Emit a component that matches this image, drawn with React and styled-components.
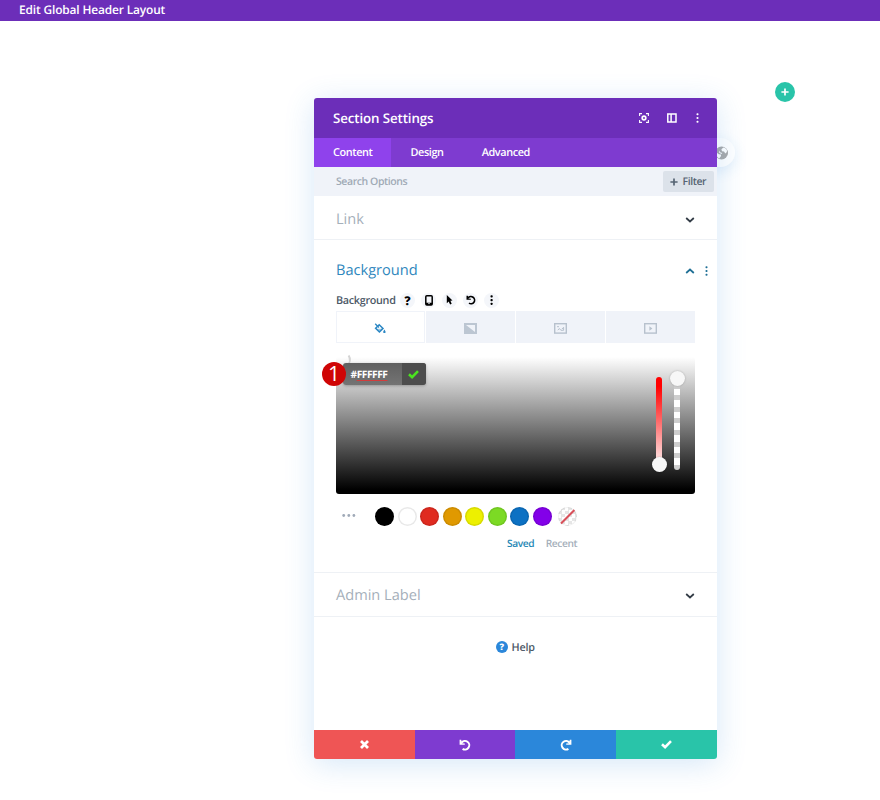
import React from "react";
import styled, { createGlobalStyle } from "styled-components";

const GlobalStyle = createGlobalStyle`
  * {
    box-sizing: border-box;
  }
  body {
    margin: 0;
    background: #fff;
    font-family: "Open Sans", "Noto Sans", sans-serif;
    font-weight: 600;
    color: #4c5866;
    text-rendering: geometricPrecision;
  }
  svg {
    display: block;
    flex: none;
  }
`;

const Page = styled.div`
  position: relative;
  width: 880px;
  height: 800px;
  overflow: hidden;
`;

const TopBar = styled.header`
  display: flex;
  align-items: center;
  height: 21px;
  padding: 0 19px 2px;
  background: #6c2eb9;
  color: #fff;
  font-size: 11.9px;
  letter-spacing: -0.13px;
`;

const AddButton = styled.div`
  position: absolute;
  left: 775px;
  top: 82px;
  width: 20px;
  height: 20px;
  border-radius: 50%;
  display: flex;
  align-items: center;
  justify-content: center;
  background: #29c4a9;
`;

const GlobeButton = styled.div`
  position: absolute;
  left: 680px;
  top: 138px;
  width: 55px;
  height: 29px;
  border-radius: 15px;
  padding: 8px 6px 0 35px;
  background: #fff;
  box-shadow: 0 4px 14px rgba(43, 135, 218, 0.14);
`;

const Modal = styled.section`
  position: relative;
  display: flex;
  flex-direction: column;
  width: 402.5px;
  height: 661px;
  margin: 77px 0 0 314px;
  border-radius: 3px;
  background: #fff;
  box-shadow: 0 5px 30px rgba(43, 135, 218, 0.2);
  overflow: hidden;
`;

const ModalHeader = styled.div`
  display: flex;
  align-items: center;
  height: 40px;
  padding: 0 18px 0 19px;
  background: #6c2eb9;
  color: #fff;
`;

const ModalTitle = styled.h1`
  flex: 1;
  margin: 0;
  font-size: 13.3px;
  font-weight: 600;
  letter-spacing: -0.1px;
`;

const HeaderIcons = styled.div`
  display: flex;
  align-items: center;
  gap: 18.5px;
`;

const Tabs = styled.nav`
  display: flex;
  height: 29px;
  background: #7e3bd0;
`;

const Tab = styled.div`
  display: flex;
  align-items: center;
  padding: 0 19px;
  background: ${(props) => (props.$active ? "#8f42ec" : "transparent")};
  color: #fff;
  font-size: 10.9px;
  letter-spacing: -0.4px;
`;

const SearchBar = styled.div`
  display: flex;
  align-items: center;
  justify-content: space-between;
  height: 29px;
  padding: 0 3px 0 22px;
  background: #f0f3f9;
  color: #a0aab6;
  font-size: 10.5px;
  letter-spacing: -0.42px;
`;

const FilterButton = styled.div`
  display: flex;
  align-items: center;
  gap: 5px;
  height: 21px;
  width: 51px;
  padding-left: 7px;
  border-radius: 2px;
  background: #dce2ea;
  color: #566473;
`;

const Group = styled.div`
  height: ${(props) => props.$height}px;
  padding: 0 22px;
  border-bottom: 1px solid #eef1f5;
`;

const GroupHead = styled.div`
  display: flex;
  align-items: center;
  justify-content: space-between;
  height: ${(props) => props.$height || 44}px;
  padding-top: 1px;
  color: ${(props) => (props.$open ? "#2f87bd" : "#a5afba")};
  font-size: 14.6px;
  font-weight: 400;
`;

const HeadIcons = styled.div`
  display: flex;
  align-items: center;
  gap: 10px;
  margin: 1px ${(props) => (props.$open ? -13 : 0)}px 0 0;
`;

const LabelRow = styled.div`
  display: flex;
  align-items: center;
  height: 16px;
  margin-top: -7px;
  font-size: 10.8px;
  letter-spacing: -0.3px;
`;

const LabelText = styled.span`
  width: 64px;
`;

const LabelIcon = styled.span`
  display: flex;
  align-items: center;
  justify-content: center;
  width: 15px;
  height: 15px;
  margin-right: 6px;
  border-radius: 50%;
  background: #f4f6fa;
  color: #000;
  font-size: 12px;
  font-weight: 800;
`;

const FillTabs = styled.div`
  display: grid;
  grid-template-columns: repeat(4, 1fr);
  gap: 1.5px;
  height: 31.5px;
  margin-top: 3px;
`;

const FillTab = styled.div`
  display: flex;
  align-items: center;
  justify-content: center;
  padding-top: 3px;
  border: 1px solid #f0f3f9;
  background: ${(props) => (props.$active ? "#fff" : "#f0f3f9")};
`;

const Picker = styled.div`
  position: relative;
  height: 137px;
  margin-top: 14.5px;
  border-radius: 3px;
  background: linear-gradient(#fff 0%, #000 97%);
`;

const PickerHandle = styled.div`
  position: absolute;
  left: -3px;
  top: -6px;
  width: 18px;
  height: 18px;
  border-radius: 50%;
  border: 2px solid transparent;
  border-right-color: #d4d4d4;
  transform: rotate(10deg);
`;

const HexField = styled.div`
  position: absolute;
  left: 7px;
  top: 6px;
  display: flex;
  width: 82.5px;
  height: 22px;
  border-radius: 3px;
  background: linear-gradient(#606060, #747474);
  box-shadow: 0 1px 3px rgba(0, 0, 0, 0.25);
  color: #fff;
  font-size: 10.2px;
  font-weight: 700;
  letter-spacing: -0.45px;
  line-height: 22px;
  overflow: hidden;
`;

const HexValue = styled.span`
  flex: 1;
  padding-left: 7.5px;
  span {
    text-decoration: underline #d33c3c 1px;
    text-underline-offset: 2px;
  }
`;

const HexConfirm = styled.span`
  display: flex;
  align-items: center;
  justify-content: center;
  width: 24px;
  background: #4d4d4d;
`;

const StepBadge = styled.div`
  position: absolute;
  left: -14px;
  top: 5px;
  width: 24px;
  height: 24px;
  border-radius: 50%;
  background: #cf0505;
  color: #fff;
  font-size: 21px;
  font-weight: 400;
  line-height: 24px;
  text-align: center;
`;

const Slider = styled.div`
  position: absolute;
  left: ${(props) => props.$left}px;
  top: 20px;
  width: 6px;
  height: 93px;
  border-radius: 3px;
`;

const SaturationSlider = styled(Slider)`
  background: linear-gradient(#f00 10%, #fff 100%);
`;

const AlphaSlider = styled(Slider)`
  background: repeating-linear-gradient(#fff 0 6.5px, #cecece 6.5px 11.6px);
`;

const SliderKnob = styled.div`
  position: absolute;
  left: -4.5px;
  top: ${(props) => props.$top}px;
  width: 15px;
  height: 15px;
  border-radius: 50%;
  background: #f7f7f7;
  box-shadow: 0 0 2px rgba(0, 0, 0, 0.25);
`;

const SwatchRow = styled.div`
  display: flex;
  align-items: center;
  height: 20px;
  margin-top: 12px;
  padding-left: 6px;
`;

const Swatches = styled.div`
  display: flex;
  gap: 3.5px;
  margin-left: 19px;
`;

const Swatch = styled.span`
  width: 19px;
  height: 19px;
  border-radius: 50%;
  background: ${(props) => props.$color};
  box-shadow: inset 0 0 0 1.5px rgba(0, 0, 0, 0.09);
`;

const ClearSwatch = styled.span`
  width: 19px;
  height: 19px;
  margin-left: 6.5px;
  border-radius: 50%;
  background: repeating-conic-gradient(#e6e6e6 0 25%, #fff 0 50%) 0 0 / 7px 7px;
  box-shadow: inset 0 0 0 1px rgba(0, 0, 0, 0.06);
`;

const PaletteTabs = styled.div`
  display: flex;
  gap: 11.5px;
  margin: 10px 0 0 171px;
  font-size: 10.2px;
  letter-spacing: -0.4px;
  line-height: 15px;
`;

const PaletteTab = styled.span`
  color: ${(props) => (props.$active ? "#1f87b5" : "#a5afba")};
`;

const Help = styled.div`
  flex: 1;
  display: flex;
  align-items: flex-start;
  justify-content: center;
  gap: 4px;
  padding-top: 23px;
  font-size: 10.8px;
  letter-spacing: -0.2px;
  line-height: 15px;
`;

const HelpIcon = styled.span`
  width: 12px;
  height: 12px;
  margin-top: 1px;
  border-radius: 50%;
  background: #2b87da;
  color: #fff;
  font-size: 9px;
  font-weight: 800;
  line-height: 12px;
  text-align: center;
`;

const Footer = styled.footer`
  display: grid;
  grid-template-columns: repeat(4, 1fr);
  height: 29px;
`;

const FooterButton = styled.div`
  display: flex;
  align-items: center;
  justify-content: center;
  background: ${(props) => props.$color};
`;

const swatches = [
  "#000000",
  "#ffffff",
  "#e02b20",
  "#e09900",
  "#edf000",
  "#7cda24",
  "#0c71c3",
  "#8300e9",
];

function Plus({ size = 8, color = "#fff" }) {
  return (
    <svg width={size} height={size} viewBox="0 0 8 8">
      <path d="M4 0.4V7.6M0.4 4H7.6" stroke={color} strokeWidth="1.7" />
    </svg>
  );
}

function Dots({ color = "#fff", size = 2 }) {
  return (
    <svg width="3" height="10" viewBox="0 0 3 10" fill={color}>
      <rect x="0.5" y="0.3" width={size} height={size} rx="0.8" />
      <rect x="0.5" y="4" width={size} height={size} rx="0.8" />
      <rect x="0.5" y="7.7" width={size} height={size} rx="0.8" />
    </svg>
  );
}

function Chevron({ up, color = "#333c46" }) {
  return (
    <svg width="10" height="6" viewBox="0 0 10 6" fill="none" stroke={color} strokeWidth="1.7">
      <path d={up ? "M1.2 5L5 1.5L8.8 5" : "M1.2 1L5 4.5L8.8 1"} />
    </svg>
  );
}

function Check({ color = "#fff" }) {
  return (
    <svg width="11" height="9" viewBox="0 0 11 9" fill="none" stroke={color} strokeWidth="2.6">
      <path d="M1 4.2L4.1 7.1L10 1.2" />
    </svg>
  );
}

function Undo({ size = 12, color = "#fff", flip }) {
  return (
    <svg width={size} height={size} viewBox="0 0 12 12">
      <g transform={flip ? "translate(12 0) scale(-1 1)" : undefined}>
        <path
          d="M2.5 3.7A4.3 4.3 0 1 1 3.6 9.8"
          fill="none"
          stroke={color}
          strokeWidth="2"
        />
        <path d="M0.6 0.8V5.8H5.8V4.5L3 4.3L2.2 0.8Z" fill={color} />
      </g>
    </svg>
  );
}

function Focus() {
  return (
    <svg width="10" height="10" viewBox="0 0 10 10" fill="none" stroke="#fff">
      <path
        d="M0.6 3V0.6H3M7 0.6H9.4V3M9.4 7V9.4H7M3 9.4H0.6V7"
        strokeWidth="1.1"
      />
      <circle cx="5" cy="5" r="1.8" strokeWidth="1.7" />
    </svg>
  );
}

function Sidebar() {
  return (
    <svg width="10" height="10" viewBox="0 0 10 10" fill="none" stroke="#fff">
      <rect x="0.8" y="1" width="8.2" height="8" strokeWidth="1.5" />
      <path d="M4.1 1V9" strokeWidth="1.5" />
    </svg>
  );
}

function Globe() {
  return (
    <svg width="14" height="14" viewBox="0 0 14 14">
      <circle cx="6.5" cy="7" r="6.5" fill="#a9a9a9" />
      <path
        d="M8.4 1.6L6.4 3.3L7 5.2L9 5.6L10.3 7.4L11.5 6.6L12.1 5C11.8 3.4 10.4 1.9 8.4 1.6ZM0.8 6L3.8 8.2L5.8 8.4L6 10.1L4.3 12.4C2.2 11.6 0.6 9.2 0.8 6ZM4 4.6L5.4 6.4L7.4 7L6.4 8.1L4.2 6.7Z"
        fill="#fff"
      />
    </svg>
  );
}

function Bucket() {
  return (
    <svg width="12" height="11" viewBox="0 0 12 11" fill="none" stroke="#2b87c4">
      <path d="M1.6 5.2L5.2 1.8L9 5.4L5.4 9Z" strokeWidth="1.5" />
      <path d="M2 5.7H8.4L5.4 8.7Z" fill="#2b87c4" stroke="none" opacity="0.45" />
      <path d="M1.2 0.8L4.9 4.5" strokeWidth="1.3" />
      <path d="M10.4 6.4C11.1 7.5 11.6 8.2 11.6 8.9A1.2 1.2 0 0 1 9.2 8.9C9.2 8.2 9.8 7.5 10.4 6.4Z" fill="#2b87c4" stroke="none" />
    </svg>
  );
}

function GradientIcon() {
  return (
    <svg width="13" height="11" viewBox="0 0 13 11">
      <rect width="13" height="11" fill="#bcc6d2" />
      <path d="M2 2H11V9Z" fill="#f0f3f9" />
    </svg>
  );
}

function ImageIcon() {
  return (
    <svg width="13" height="11" viewBox="0 0 13 11" fill="none" stroke="#b7c1cd">
      <rect x="0.7" y="0.7" width="11.6" height="9.4" strokeWidth="1.4" />
      <path d="M3 3.7H5M3.8 7.2L5.4 5.5L6.9 7.3H9.6V4.3L7.8 6.2" strokeWidth="1" />
    </svg>
  );
}

function VideoIcon() {
  return (
    <svg width="13" height="11" viewBox="0 0 13 11">
      <rect x="0.7" y="0.7" width="11.6" height="9.4" fill="none" stroke="#b7c1cd" strokeWidth="1.4" />
      <path d="M5.4 3.2V7.7L8.4 5.4Z" fill="#b7c1cd" />
    </svg>
  );
}

function Phone() {
  return (
    <svg width="8" height="11" viewBox="0 0 8 11">
      <rect x="0.8" y="0.8" width="6.4" height="9.2" rx="1" fill="none" stroke="#000" strokeWidth="1.5" />
      <path d="M1 7.8H7V10H1ZM3.2 8.2V9.2H4.8V8.2Z" fill="#000" fillRule="evenodd" />
    </svg>
  );
}

function Cursor() {
  return (
    <svg width="7" height="10" viewBox="0 0 7 10">
      <path d="M0.8 0L6.5 5.6L4.4 5.8L5.7 8.8L4.1 9.6L2.7 6.6L0.8 8.2Z" fill="#000" />
    </svg>
  );
}

function ColorPicker() {
  return (
    <Picker>
      <PickerHandle />
      <HexField>
        <HexValue>
          #<span>FFFFFF</span>
        </HexValue>
        <HexConfirm>
          <Check color="#4be31f" />
        </HexConfirm>
      </HexField>
      <StepBadge>1</StepBadge>
      <SaturationSlider $left={320}>
        <SliderKnob $top={80} />
      </SaturationSlider>
      <AlphaSlider $left={338}>
        <SliderKnob $top={-6.5} />
      </AlphaSlider>
    </Picker>
  );
}

function Palette() {
  return (
    <>
      <SwatchRow>
        <svg width="14" height="4" viewBox="0 0 14 4" fill="#a0aab8">
          <circle cx="1.7" cy="1.5" r="1.4" />
          <circle cx="6.8" cy="1.5" r="1.4" />
          <circle cx="11.9" cy="1.5" r="1.4" />
        </svg>
        <Swatches>
          {swatches.map((color) => (
            <Swatch key={color} $color={color} />
          ))}
        </Swatches>
        <ClearSwatch>
          <svg width="19" height="19" viewBox="0 0 19 19">
            <path d="M3 16.5L16.4 3" stroke="#d9505a" strokeWidth="2" />
          </svg>
        </ClearSwatch>
      </SwatchRow>
      <PaletteTabs>
        <PaletteTab $active>Saved</PaletteTab>
        <PaletteTab>Recent</PaletteTab>
      </PaletteTabs>
    </>
  );
}

function App() {
  return (
    <Page>
      <GlobalStyle />
      <TopBar>Edit Global Header Layout</TopBar>
      <AddButton>
        <Plus />
      </AddButton>
      <GlobeButton>
        <Globe />
      </GlobeButton>

      <Modal>
        <ModalHeader>
          <ModalTitle>Section Settings</ModalTitle>
          <HeaderIcons>
            <Focus />
            <Sidebar />
            <Dots />
          </HeaderIcons>
        </ModalHeader>

        <Tabs>
          <Tab $active>Content</Tab>
          <Tab>Design</Tab>
          <Tab>Advanced</Tab>
        </Tabs>

        <SearchBar>
          Search Options
          <FilterButton>
            <Plus color="#566473" />
            Filter
          </FilterButton>
        </SearchBar>

        <Group $height={44}>
          <GroupHead $height={45}>
            Link
            <HeadIcons>
              <Chevron />
            </HeadIcons>
          </GroupHead>
        </Group>

        <Group $height={333}>
          <GroupHead $open $height={59}>
            Background
            <HeadIcons $open>
              <Chevron up color="#1f6f95" />
              <Dots color="#1f6f95" />
            </HeadIcons>
          </GroupHead>
          <LabelRow>
            <LabelText>Background</LabelText>
            <LabelIcon>?</LabelIcon>
            <LabelIcon>
              <Phone />
            </LabelIcon>
            <LabelIcon>
              <Cursor />
            </LabelIcon>
            <LabelIcon>
              <Undo size={10} color="#000" />
            </LabelIcon>
            <LabelIcon>
              <Dots color="#000" size={2.2} />
            </LabelIcon>
          </LabelRow>
          <FillTabs>
            <FillTab $active>
              <Bucket />
            </FillTab>
            <FillTab>
              <GradientIcon />
            </FillTab>
            <FillTab>
              <ImageIcon />
            </FillTab>
            <FillTab>
              <VideoIcon />
            </FillTab>
          </FillTabs>
          <ColorPicker />
          <Palette />
        </Group>

        <Group $height={44}>
          <GroupHead $height={43}>
            Admin Label
            <HeadIcons>
              <Chevron />
            </HeadIcons>
          </GroupHead>
        </Group>

        <Help>
          <HelpIcon>?</HelpIcon>
          Help
        </Help>

        <Footer>
          <FooterButton $color="#ef5555">
            <svg width="9" height="9" viewBox="0 0 9 9">
              <path d="M1 1L8 8M8 1L1 8" stroke="#fff" strokeWidth="2.8" />
            </svg>
          </FooterButton>
          <FooterButton $color="#7e3bd0">
            <Undo />
          </FooterButton>
          <FooterButton $color="#2b87da">
            <Undo flip />
          </FooterButton>
          <FooterButton $color="#29c4a9">
            <Check />
          </FooterButton>
        </Footer>
      </Modal>
    </Page>
  );
}

export default App;
